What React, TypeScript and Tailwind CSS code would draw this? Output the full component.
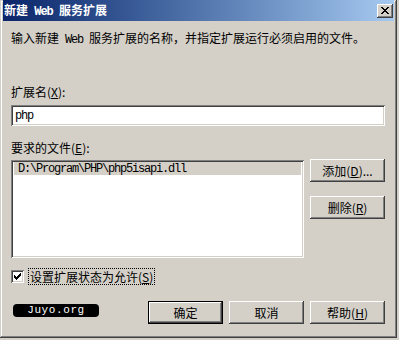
import React from "react";

const raised =
  "bg-[#d4d0c8] shadow-[inset_-1px_-1px_#404040,inset_1px_1px_#ffffff,inset_-2px_-2px_#808080,inset_2px_2px_#d4d0c8]";
const sunken =
  "shadow-[inset_1px_1px_#808080,inset_-1px_-1px_#ffffff,inset_2px_2px_#404040,inset_-2px_-2px_#d4d0c8]";

function Mono({ children }: { children: React.ReactNode }) {
  return (
    <span className="font-['Liberation_Mono',monospace] text-[12px] tracking-[-1.2px] whitespace-pre">
      {children}
    </span>
  );
}

function CloseGlyph() {
  const rows = ["XX....XX", ".XX..XX.", "..XXXX..", "...XX...", "..XXXX..", ".XX..XX.", "XX....XX"];
  return (
    <svg width="8" height="7" viewBox="0 0 8 7" shapeRendering="crispEdges">
      {rows.flatMap((r, y) =>
        r.split("").map((c, x) => (c === "X" ? <rect key={`${x}-${y}`} x={x} y={y} width="1" height="1" fill="#000" /> : null))
      )}
    </svg>
  );
}

function CheckGlyph() {
  const rows = ["......X", ".....XX", "X...XXX", "XX.XXX.", "XXXXX..", ".XXX...", "..X...."];
  return (
    <svg width="7" height="7" viewBox="0 0 7 7" shapeRendering="crispEdges">
      {rows.flatMap((r, y) =>
        r.split("").map((c, x) => (c === "X" ? <rect key={`${x}-${y}`} x={x} y={y} width="1" height="1" fill="#000" /> : null))
      )}
    </svg>
  );
}

function Btn({ children, className = "w-[75px] h-[23px]" }: { children: React.ReactNode; className?: string }) {
  return (
    <div className={`flex items-center justify-center ${raised} ${className}`}>
      <span className="leading-[14px]">{children}</span>
    </div>
  );
}

export default function App() {
  return (
    <div className="w-[399px] h-[340px] bg-[#d4d0c8] overflow-hidden font-['Noto_Sans_CJK_SC',sans-serif] text-[12px] leading-[14px] text-black">
      <div className="w-[397px] h-[338px] flex flex-col px-[3px] pb-[3px] shadow-[inset_-1px_-1px_#404040,inset_1px_1px_#d4d0c8,inset_-2px_-2px_#808080,inset_2px_2px_#ffffff]">
        {/* Title bar */}
        <div className="h-[21px] flex items-center bg-linear-to-r from-[#0a246a] to-[#a6caf0] pl-[1px] pr-[1px]">
          <span className="flex-1 text-white font-bold leading-[14px]">
            新建<span className="font-['Liberation_Mono',monospace] text-[12px] font-bold tracking-[-1px] whitespace-pre"> Web </span>服务扩展
          </span>
          <div className={`w-[16px] h-[14px] flex items-center justify-center ${raised}`}>
            <CloseGlyph />
          </div>
        </div>

        {/* Content */}
        <div className="flex flex-col pl-[8px]">
          <div className="mt-[10px] h-[14px] whitespace-nowrap">
            输入新建<Mono> Web </Mono>服务扩展的名称，并指定扩展运行必须启用的文件。
          </div>

          <div className="mt-[40px] h-[14px]">
            扩展名(<span className="underline">X</span>):
          </div>
          <div className={`mt-[6px] w-[374px] h-[21px] bg-white flex items-center pl-[4px] ${sunken}`}>
            <Mono>php</Mono>
          </div>

          <div className="mt-[15px] h-[14px]">
            要求的文件(<span className="underline">E</span>):
          </div>

          <div className="mt-[4px] flex">
            <div className={`mt-[1px] w-[293px] h-[98px] bg-white p-[2px] ${sunken}`}>
              <div className="h-[13px] ml-[1px] mr-[1px] bg-[#d4d0c8] flex items-center pl-[4px]">
                <Mono>D:\Program\PHP\php5isapi.dll</Mono>
              </div>
            </div>
            <div className="ml-[6px] flex flex-col gap-[14px]">
              <Btn>
                添加(<span className="underline">D</span>)...
              </Btn>
              <Btn>
                删除(<span className="underline">R</span>)
              </Btn>
            </div>
          </div>

          <div className="mt-[10px] h-[17px] flex items-center">
            <div className={`w-[13px] h-[13px] bg-white flex items-center justify-center ${sunken}`}>
              <CheckGlyph />
            </div>
            <div className="ml-[4px] h-[17px] border border-dotted border-black px-[1px] flex items-center">
              设置扩展状态为允许(<span className="underline">S</span>)
            </div>
          </div>

          <div className="mt-[16px] flex items-start w-[374px]">
            <div className="ml-[2px] mt-[3px] w-[86px] h-[13px] rounded-[4px] bg-black flex items-center justify-center">
              <span className="font-['Liberation_Mono',monospace] text-[11px] leading-[11px] tracking-[0.6px] text-white">
                Juyo.org
              </span>
            </div>
            <div className="flex-1" />
            <div className="border border-black">
              <Btn className="w-[73px] h-[21px]">确定</Btn>
            </div>
            <Btn className="w-[75px] h-[23px] ml-[6px]">取消</Btn>
            <Btn className="w-[75px] h-[23px] ml-[6px]">
              帮助(<span className="underline">H</span>)
            </Btn>
          </div>
        </div>
      </div>
    </div>
  );
}
